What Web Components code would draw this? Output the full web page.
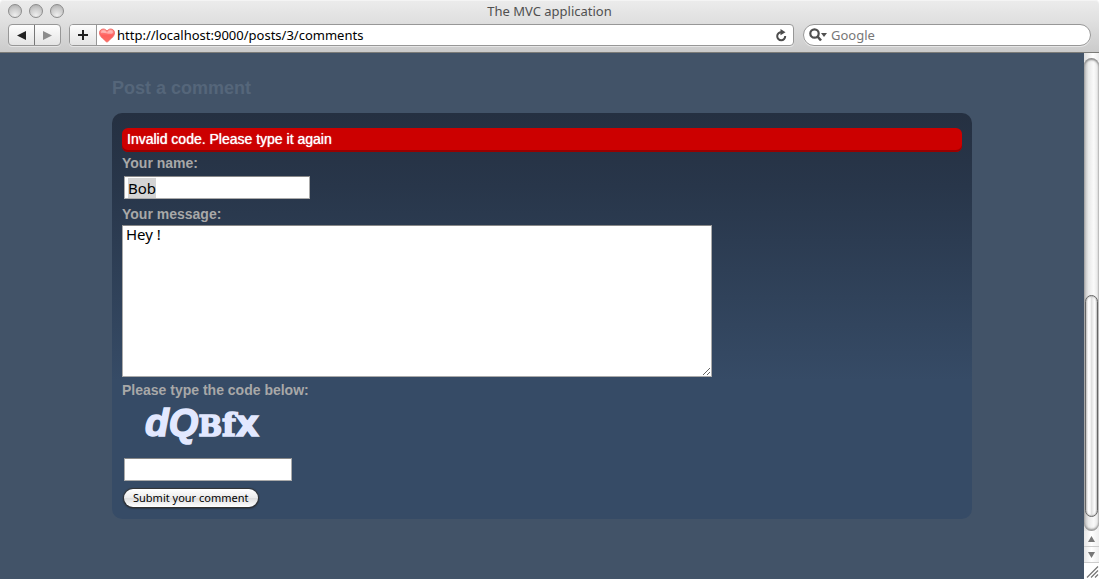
<!DOCTYPE html>
<html lang="en">
<head>
<meta charset="utf-8">
<title>The MVC application</title>
<style>
html, body { margin: 0; background: #fff; }
body { font: 13px/16px "Noto Sans", "Open Sans", sans-serif; }
</style>
</head>
<body>
<browser-window heading="The MVC application">
  <browser-toolbar slot="toolbar" address="http://localhost:9000/posts/3/comments"></browser-toolbar>
  <comment-page>
    <comment-panel>
      <error-banner>Invalid code. Please type it again</error-banner>
      <comment-form></comment-form>
    </comment-panel>
  </comment-page>
  <scroll-bar slot="scrollbar"></scroll-bar>
</browser-window>
<script>
function define(name, markup, setup) {
  customElements.define(name, class extends HTMLElement {
    constructor() {
      super();
      const template = document.createElement('template');
      template.innerHTML = markup;
      this.attachShadow({ mode: 'open' }).append(template.content.cloneNode(true));
    }
    connectedCallback() {
      if (setup) setup(this, this.shadowRoot);
    }
  });
}

define('browser-window', `
<style>
:host { display: flex; flex-direction: column; min-height: 100vh; }
header { box-sizing: border-box; height: 53px; background: linear-gradient(#ececec, #e0e0e0 40%, #cbcbcb); border-bottom: 1px solid #7b7b78; border-radius: 4px 4px 0 0; box-shadow: inset 0 1px #f4f4f4; }
.title { display: grid; grid-template-columns: 1fr auto 1fr; height: 22px; align-items: center; color: #505050; }
.lights { display: flex; gap: 7px; padding-left: 8px; }
.lights i { box-sizing: border-box; width: 14px; height: 14px; border: 1px solid #8c8c8c; border-radius: 50%; background: radial-gradient(circle at 50% 85%, #eee, #ccc 55%, #a9a9a9); }
.body { flex: 1; display: flex; }
.view { flex: 1; min-width: 0; background: #425368; }
</style>
<header>
  <div class="title"><div class="lights"><i></i><i></i><i></i></div><span></span></div>
  <slot name="toolbar"></slot>
</header>
<div class="body"><div class="view"><slot></slot></div><slot name="scrollbar"></slot></div>`,
(el, root) => { root.querySelector('span').textContent = el.getAttribute('heading'); });

define('browser-toolbar', `
<style>
:host { display: flex; gap: 8px; padding: 2px 8px 0; }
* { box-sizing: border-box; }
button { font: inherit; padding: 0; margin: 0; border: 0; background: none; display: grid; place-items: center; }
.nav, .address, .search { display: flex; height: 22px; border: 1px solid #979797; border-radius: 4px; box-shadow: 0 1px #e6e6e6; overflow: hidden; }
.nav, .add { background: linear-gradient(#fdfdfd, #e4e4e4); }
.nav button { width: 25px; }
.nav button + button { width: 26px; border-left: 1px solid #777; }
.address { flex: 1; background: #fff; align-items: center; }
.add { width: 27px; height: 20px; border-right: 1px solid #979797; }
.heart { flex: none; margin: 0 2px 0 2px; }
input { font: inherit; line-height: 18px; height: 18px; min-width: 0; flex: 1; border: 0; padding: 0; margin: 0; outline: 0; background: none; color: #000; }
.reload { width: 24px; height: 20px; }
.search { width: 288px; margin-left: 1px; border-radius: 11px; background: #fff; align-items: center; padding: 0 8px 0 5px; gap: 4px; }
.search label { display: flex; }
::placeholder { color: #777; opacity: 1; }
</style>
<div class="nav">
  <button aria-label="Back"><svg width="9" height="9" viewBox="0 0 9 9"><path d="M0 4.5 9 0v9z" fill="#222"/></svg></button>
  <button aria-label="Forward"><svg width="9" height="9" viewBox="0 0 9 9"><path d="M9 4.5 0 0v9z" fill="#8c8c8c"/></svg></button>
</div>
<div class="address">
  <button class="add" aria-label="Add bookmark"><svg width="10" height="10" viewBox="0 0 10 10"><path d="M5 0v10M0 5h10" stroke="#222" stroke-width="2"/></svg></button>
  <svg class="heart" width="16" height="15" viewBox="0 0 16 15">
    <defs><linearGradient id="h" x2="0" y2="1"><stop stop-color="#ff9c98"/><stop offset=".5" stop-color="#ff605e"/><stop offset="1" stop-color="#fb6e65"/></linearGradient></defs>
    <path d="M8 14.3C5.500 11.500.5 9 .5 4.800.5 2.500 2.200 1 4.300 1 6 1 7.300 2 8 3 8.700 2 10 1 11.700 1c2.100 0 3.800 1.500 3.800 3.800C15.500 9 10.500 11.500 8 14.300z" fill="url(#h)" stroke="#ee5b55" stroke-width=".8"/>
    <path d="M2 5C2 3 3.200 2.300 4.500 2.300 6 2.300 7.300 3.500 8 4.700 8.700 3.500 10 2.300 11.500 2.300 12.800 2.300 14 3 14 5 11 7.500 5 3.500 2 5z" fill="#fff" opacity=".4"/>
  </svg>
  <input type="text" aria-label="Address">
  <button class="reload" aria-label="Reload"><svg width="12" height="13" viewBox="0 0 12 13"><path d="M6.500 3.200A4 4 0 1 0 10.200 7" fill="none" stroke="#4c4c4c" stroke-width="2"/><path d="M5.500 0 10.500 3.300 5.500 6.300z" fill="#4c4c4c"/></svg></button>
</div>
<div class="search">
  <label for="q"><svg width="18" height="14" viewBox="0 0 18 14"><circle cx="5.500" cy="5.500" r="4.200" fill="none" stroke="#505050" stroke-width="2.200"/><path d="M8.500 8.500 12 12.500" stroke="#505050" stroke-width="2.600"/><path d="M12 5h6l-3 4z" fill="#505050"/></svg></label>
  <input id="q" type="text" placeholder="Google" aria-label="Search">
</div>`,
(el, root) => { root.querySelector('.address input').value = el.getAttribute('address'); });

define('scroll-bar', `
<style>
:host { display: flex; flex-direction: column; width: 15px; flex: none; background: linear-gradient(90deg, #ddd, #fff 60%, #eee); }
.track { flex: 1; display: flex; flex-direction: column; margin-top: 5px; border-radius: 8px; background: linear-gradient(90deg, #b9b9b9, #e9e9e9 30%, #fafafa 65%, #e2e2e2); box-shadow: inset 0 2px 2px #8b8b8b, inset 0 -2px 2px #999; }
.before { flex: 238; }
.thumb { flex: 221; margin: 0 1px; border: 1px solid #666; border-radius: 7px; background: linear-gradient(90deg, #ddd, #fff 25%, #f4f4f4 40%, #e0e0e0 50%, #fff 80%, #ddd); box-shadow: inset 0 0 2px #888; }
.after { flex: 14; }
button { height: 16px; width: 15px; padding: 0; border: 0; border-bottom: 1px solid #ccc; background: linear-gradient(90deg, #e6e6e6, #fff 50%, #eee); display: grid; place-items: center; }
.corner { display: block; background: #fff; }
</style>
<div class="track"><div class="before"></div><div class="thumb"></div><div class="after"></div></div>
<button aria-label="Scroll up"><svg width="7" height="6"><path d="M3.500 0 7 6H0z" fill="#777"/></svg></button>
<button aria-label="Scroll down"><svg width="7" height="6"><path d="M3.500 6 7 0H0z" fill="#777"/></svg></button>
<svg class="corner" width="15" height="16" viewBox="0 0 15 16"><path d="M3 14.500 14 3.500M7 14.500 14 7.500M11 14.500 14 11.500" stroke="#777" stroke-width="1.200"/></svg>`);

define('comment-page', `
<style>
:host { display: block; max-width: 860px; margin: 0 auto; padding: 24px 16px 40px; font-family: "Liberation Sans", Arial, sans-serif; }
h2 { margin: 0 0 14px; font-size: 18px; line-height: 22px; color: #55667a; }
</style>
<h2>Post a comment</h2>
<slot></slot>`);

define('comment-panel', `
<style>
:host { display: block; padding: 15px 10px 12px; border-radius: 10px; background: linear-gradient(#253041, #28364a 18%, #364b66 66%); }
</style>
<slot></slot>`);

define('error-banner', `
<style>
:host { display: block; padding: 3px 5px 5px; border-radius: 6px; background: #c00; box-shadow: inset 0 -2px #990000; color: #fff; font-size: 14px; line-height: 16px; text-shadow: 0 0 1px #fff; }
</style>
<slot></slot>`);

define('comment-form', `
<style>
:host { display: block; font-size: 14px; line-height: 18px; }
form { display: flex; flex-direction: column; align-items: flex-start; }
* { box-sizing: border-box; }
label { font-weight: bold; color: #a8a8a8; padding: 2px 0; }
input, textarea { font: 15px/18px "Noto Sans", "Open Sans", sans-serif; color: #000; background: #fff; border: 1px solid #aaa; border-top-color: #888; border-radius: 0; outline: 0; margin: 0; }
input { height: 23px; padding: 1px 3px; margin-left: 2px; }
input::selection { background: #d4d4d4; color: #000; }
#name { width: 186px; margin: 2px 2px 4px; }
#message { width: 590px; max-width: 100%; height: 152px; margin-bottom: 2px; padding: 0 3px; line-height: 16px; resize: both; display: block; }
#code { width: 168px; }
.captcha { display: block; margin-bottom: 7px; fill: #e2e8ff; stroke: #e2e8ff; overflow: visible; }
button { height: 18px; margin: 8px 2px 0; padding: 0 9px; border: 0; border-radius: 9px; font: 11px/18px "Noto Sans", "Open Sans", sans-serif; color: #000; background: linear-gradient(#fff, #ececec 48%, #dedede 52%, #fff); box-shadow: 0 0 1px 1px #333, 0 1px 2px #111; }
</style>
<form onsubmit="return false">
  <label for="name">Your name:</label>
  <input id="name" type="text" value="Bob">
  <label for="message">Your message:</label>
  <textarea id="message">Hey !</textarea>
  <label for="code">Please type the code below:</label>
  <svg class="captcha" width="150" height="50" viewBox="0 0 150 50" stroke-width="1.500" font-weight="bold">
    <text x="23" y="35"><tspan font-family="Liberation Sans" font-style="italic" font-size="39">d</tspan><tspan font-family="Liberation Sans" font-style="italic" font-size="38">Q</tspan><tspan font-family="DejaVu Serif" font-size="28">B</tspan><tspan font-family="DejaVu Serif" font-size="32">f</tspan><tspan font-family="DejaVu Sans" font-size="36">x</tspan></text>
  </svg>
  <input id="code" type="text">
  <button type="submit">Submit your comment</button>
</form>`,
(el, root) => { const field = root.querySelector('#name'); field.focus(); field.select(); });
</script>
</body>
</html>
